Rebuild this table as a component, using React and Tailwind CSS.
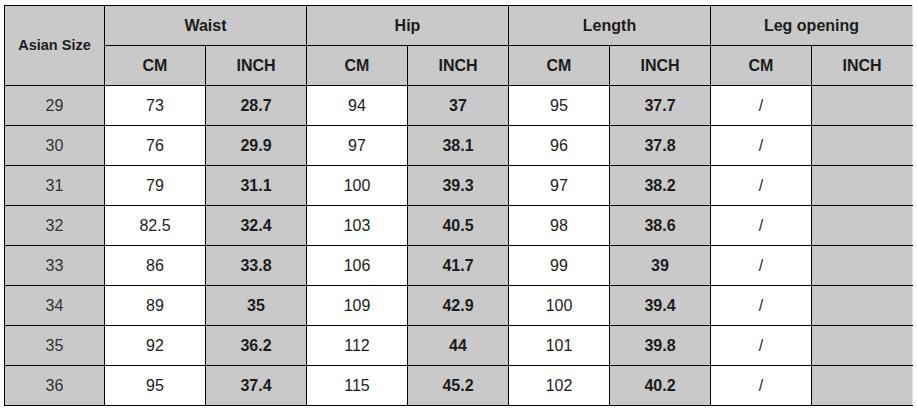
import React from 'react'

const rows = [
    ["29", "73", "28.7", "94", "37", "95", "37.7"],
    ["30", "76", "29.9", "97", "38.1", "96", "37.8"],
    ["31", "79", "31.1", "100", "39.3", "97", "38.2"],
    ["32", "82.5", "32.4", "103", "40.5", "98", "38.6"],
    ["33", "86", "33.8", "106", "41.7", "99", "39"],
    ["34", "89", "35", "109", "42.9", "100", "39.4"],
    ["35", "92", "36.2", "112", "44", "101", "39.8"],
    ["36", "95", "37.4", "115", "45.2", "102", "40.2"],
];

const groups = ["Waist", "Hip", "Length", "Leg opening"];

const App = () => {
    const gray = "bg-[#c9c9c9]";
    const cell = "border border-black text-center align-middle p-0";

    return (
        <div className="w-[917px] h-[410px] bg-white pt-[5px] pl-[4px]" style={{ fontFamily: '"Liberation Sans", Arial, sans-serif' }}>
            <table className="border-collapse table-fixed text-[#1c1c1c]">
                <colgroup>
                    <col className="w-[100px]" />
                    {Array.from({ length: 8 }).map((_, i) => (
                        <col key={i} className="w-[101px]" />
                    ))}
                </colgroup>
                <thead>
                    <tr className="h-[40px]">
                        <th rowSpan={2} className={`${cell} ${gray} text-[14.5px] font-bold`}>Asian Size</th>
                        {groups.map((g, i) => (
                            <th key={g} colSpan={2} className={`${cell} ${gray} text-[16px] font-bold ${i === 3 ? "border-r-[#e2e2e2]" : ""}`}>{g}</th>
                        ))}
                    </tr>
                    <tr className="h-[40px]">
                        {groups.map((g, i) => (
                            <React.Fragment key={g}>
                                <th className={`${cell} ${gray} text-[16px] font-bold`}>CM</th>
                                <th className={`${cell} ${gray} text-[16px] font-bold ${i === 3 ? "border-r-[#e2e2e2]" : ""}`}>INCH</th>
                            </React.Fragment>
                        ))}
                    </tr>
                </thead>
                <tbody>
                    {rows.map((r) => (
                        <tr key={r[0]} className="h-[40px]">
                            <td className={`${cell} ${gray} text-[16px] text-[#333]`}>{r[0]}</td>
                            {[1, 3, 5].map((k) => (
                                <React.Fragment key={k}>
                                    <td className={`${cell} bg-white text-[16px]`}>{r[k]}</td>
                                    <td className={`${cell} ${gray} text-[16px] font-bold`}>{r[k + 1]}</td>
                                </React.Fragment>
                            ))}
                            <td className={`${cell} bg-white text-[16px]`}>/</td>
                            <td className={`${cell} ${gray} border-r-[#e2e2e2]`}></td>
                        </tr>
                    ))}
                </tbody>
            </table>
        </div>
    );
};

export default App
